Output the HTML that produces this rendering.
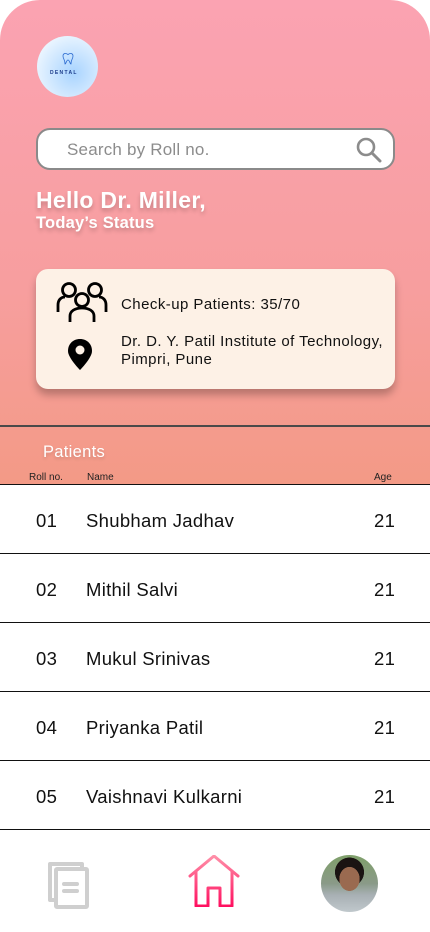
<!DOCTYPE html>
<html><head><style>
*{margin:0;padding:0;box-sizing:border-box}
body{width:430px;height:932px;background:#fff;font-family:"Liberation Sans",sans-serif;position:relative;overflow:hidden}
.hdr{position:absolute;left:0;top:0;width:430px;height:484px;border-radius:40px 40px 0 0;background:linear-gradient(180deg,#fba3b2 0%,#f79e9e 60%,#f39a86 100%)}
.logo{position:absolute;left:37px;top:36px;width:61px;height:61px;border-radius:50%;background:radial-gradient(circle at 60% 60%,#a9d4ff,#eaf5ff 75%);}
.logo span{position:absolute;left:13px;top:34px;font-size:5px;letter-spacing:1.3px;color:#1a3a8a;font-weight:bold}
.search{position:absolute;left:36px;top:128px;width:359px;height:42px;border:2px solid #8a8a8a;border-radius:14px;background:#fff}
.search span{position:absolute;left:29px;top:10px;font-size:17px;color:#8c8c8c;letter-spacing:.2px}
.h1{position:absolute;left:36px;top:187px;font-size:23px;font-weight:bold;color:#fff;letter-spacing:.3px;text-shadow:0 3px 4px rgba(0,0,0,.2)}
.h2{position:absolute;left:36px;top:214px;font-size:16.5px;font-weight:bold;color:#fff;letter-spacing:.2px;text-shadow:0 3px 4px rgba(0,0,0,.2)}
.card{position:absolute;left:36px;top:269px;width:359px;height:120px;border-radius:12px;background:#fdf1e6;box-shadow:0 6px 8px rgba(0,0,0,.25)}
.card .t{position:absolute;left:85px;font-size:15px;color:#111;line-height:18px;letter-spacing:.45px;white-space:nowrap}
.line{position:absolute;left:0;top:425px;width:430px;height:2px;background:#4a4a4a}
.pt{position:absolute;left:43px;top:443px;font-size:16.5px;color:#fff;letter-spacing:.3px;text-shadow:0 2px 3px rgba(0,0,0,.15)}
.th{position:absolute;top:472px;font-size:10px;color:#222}
.row{position:absolute;left:0;width:430px;height:69px;border-top:1px solid #111;font-size:18.5px;color:#111;letter-spacing:.3px}
.row span{position:absolute;top:25px}
</style></head><body>
<div class="hdr"></div>
<div class="logo"><svg style="position:absolute;left:24px;top:17px" width="14" height="13" viewBox="0 0 14 13"><path d="M2 3C2 0 5 0 7 1.5 9 0 12 0 12 3 12 6 10 6 10 11 9 11 8.5 7 7 7 5.5 7 5 11 4 11 4 6 2 6 2 3Z" fill="none" stroke="#2a6ad0" stroke-width=".8"/></svg><span>DENTAL</span></div>
<div class="search"><span>Search by Roll no.</span>
<svg style="position:absolute;right:10px;top:7px" width="28" height="26" viewBox="0 0 28 26"><circle cx="11" cy="10" r="8" fill="none" stroke="#8c8c8c" stroke-width="2.6"/><path d="M17 16L25 24" stroke="#8c8c8c" stroke-width="3" stroke-linecap="round"/></svg></div>
<div class="h1">Hello Dr. Miller,</div>
<div class="h2">Today’s Status</div>
<div class="card">
<svg style="position:absolute;left:20px;top:12px" width="52" height="42" viewBox="0 0 52 42" fill="none" stroke="#000" stroke-width="2.8"><circle cx="13" cy="9" r="6.5"/><circle cx="39" cy="9" r="6.5"/><circle cx="26" cy="19" r="6.5"/><path d="M2 31V24C2 19 5 16 9 16"/><path d="M50 31V24C50 19 47 16 43 16"/><path d="M14 41V35C14 30 19 27 26 27 33 27 38 30 38 35V41"/></svg>
<div class="t" style="top:27px">Check-up Patients: 35/70</div>
<svg style="position:absolute;left:32px;top:70px" width="24" height="31" viewBox="0 0 24 31"><path d="M12 0C5 0 0 5 0 12 0 19 12 31 12 31S24 19 24 12C24 5 19 0 12 0Z" fill="#000"/><circle cx="12" cy="11" r="4.5" fill="#fdf1e6"/></svg>
<div class="t" style="top:64px">Dr. D. Y. Patil Institute of Technology,<br>Pimpri, Pune</div>
</div>
<div class="line"></div>
<div class="pt">Patients</div>
<div class="th" style="left:29px">Roll no.</div>
<div class="th" style="left:87px">Name</div>
<div class="th" style="left:374px">Age</div>
<div class="row" style="top:484px"><span style="left:36px">01</span><span style="left:86px">Shubham Jadhav</span><span style="left:374px">21</span></div>
<div class="row" style="top:553px"><span style="left:36px">02</span><span style="left:86px">Mithil Salvi</span><span style="left:374px">21</span></div>
<div class="row" style="top:622px"><span style="left:36px">03</span><span style="left:86px">Mukul Srinivas</span><span style="left:374px">21</span></div>
<div class="row" style="top:691px"><span style="left:36px">04</span><span style="left:86px">Priyanka Patil</span><span style="left:374px">21</span></div>
<div class="row" style="top:760px"><span style="left:36px">05</span><span style="left:86px">Vaishnavi Kulkarni</span><span style="left:374px">21</span></div>
<div class="row" style="top:829px;height:1px"></div>
<svg style="position:absolute;left:48px;top:861px" width="42" height="48" viewBox="0 0 42 48" fill="none" stroke="#cfcfcf" stroke-width="4" stroke-linejoin="round"><path d="M34 7V3H2V39H7"/><rect x="8" y="8" width="31" height="38" rx="1"/><path d="M16 23H29M16 30H29" stroke-linecap="round"/></svg>
<svg style="position:absolute;left:188px;top:855px" width="52" height="52" viewBox="0 0 52 52"><defs><linearGradient id="g" x1="0" y1="0" x2="0" y2="1"><stop offset="0" stop-color="#ff8fa8"/><stop offset="1" stop-color="#ff1060"/></linearGradient></defs><path d="M2 19L26 -1 50 19M8 14V49H20V31H32V49H44V14" fill="none" stroke="url(#g)" stroke-width="3" stroke-linejoin="round" stroke-linecap="round" transform="translate(0,2)"/></svg>
<div style="position:absolute;left:321px;top:855px;width:57px;height:57px;border-radius:50%;background:radial-gradient(ellipse 22% 26% at 50% 42%,#9a6a50 0 80%,transparent 82%),radial-gradient(ellipse 28% 28% at 50% 30%,#1a1412 0 90%,transparent 92%),linear-gradient(180deg,#7fa06a 0%,#8a9a88 50%,#a8b0b4 70%,#c0c8cc 100%)"></div>
</body></html>
